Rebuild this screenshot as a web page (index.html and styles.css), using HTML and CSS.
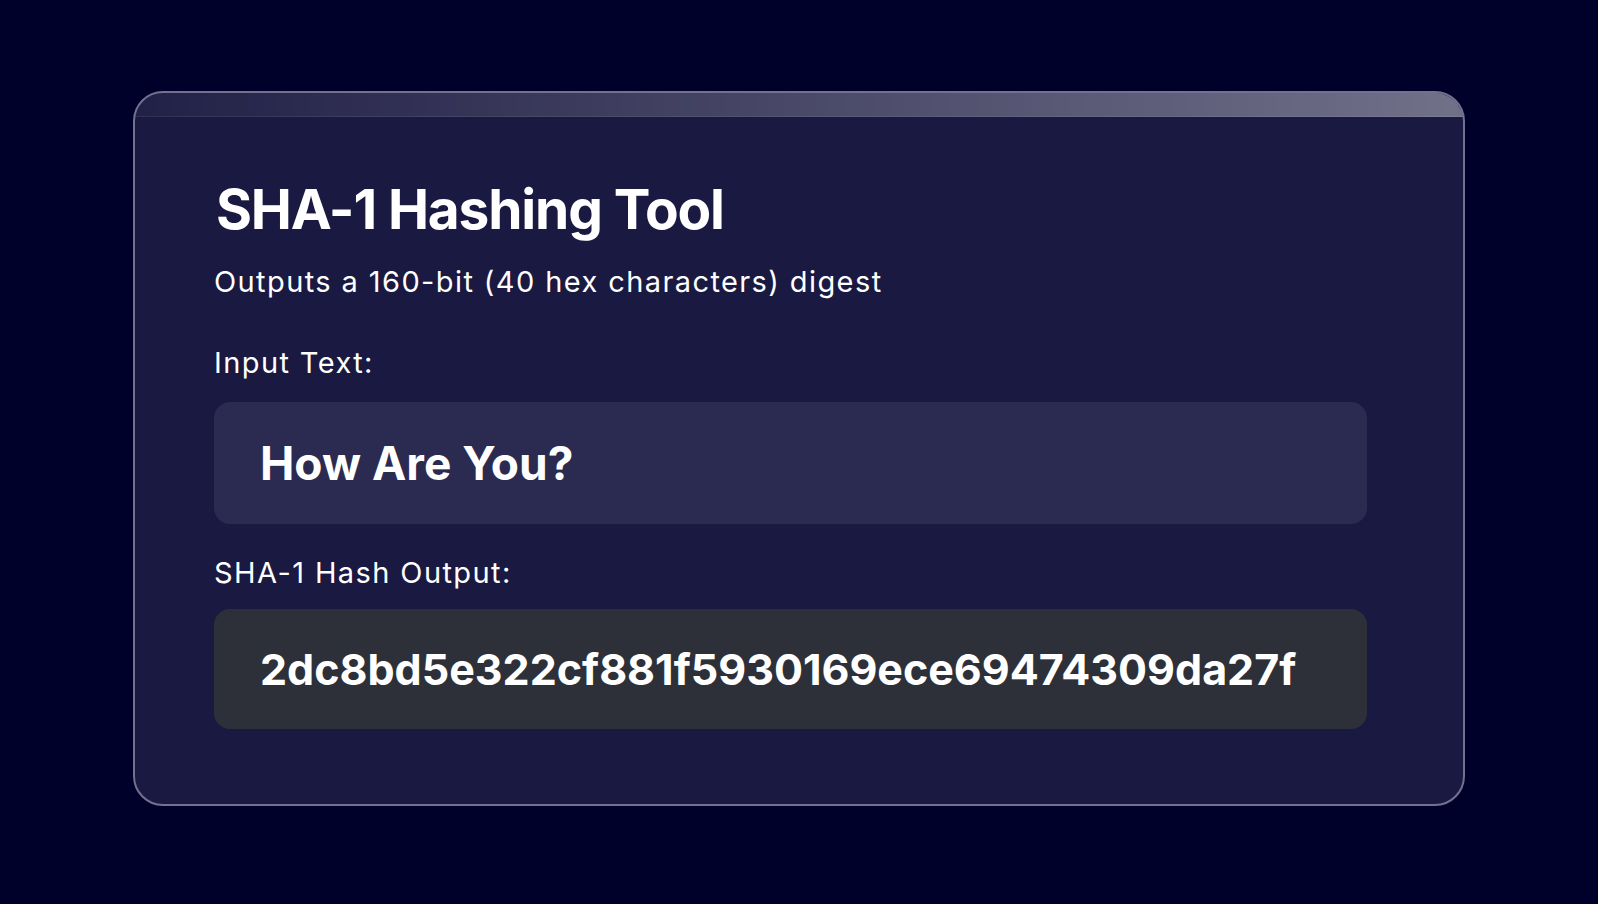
FILE: index.html
```html
<!DOCTYPE html>
<html lang="en">
<head>
  <meta charset="UTF-8">
  <meta name="viewport" content="width=device-width, initial-scale=1.0">
  <title>SHA-1 Hashing Tool</title>
  <link rel="stylesheet" href="styles.css">
</head>
<body>
  <div class="hash-card">
    <div class="card-glow"></div>
    <div class="card-body">
      <h1>SHA-1 Hashing Tool</h1>
      <p class="subtitle">Outputs a 160-bit (40 hex characters) digest</p>

      <label for="inputText" class="field-label">Input Text:</label>
      <input type="text" id="inputText" class="text-input" value="How Are You?">

      <label class="field-label output-label">SHA-1 Hash Output:</label>
      <div class="hash-output" id="hashOutput">2dc8bd5e322cf881f5930169ece69474309da27f</div>
    </div>
  </div>
</body>
</html>
```

FILE: styles.css
```css
body {
  background-color: #00012b; /* deep navy */
  font-family: Inter, "Noto Sans", sans-serif;
  color: #ffffff;
  margin: 0;
  padding: 0;
}

.hash-card {
  width: 1328px;
  margin: 91px 0 0 133px;
  background-color: #1a1941;
  border: 2px solid #72718f;
  border-radius: 30px;
  overflow: hidden;
}

/* light strip along the top edge */
.card-glow {
  height: 23px;
  background: linear-gradient(to right, rgba(255, 255, 255, 0.03), rgba(255, 255, 255, 0.38));
  border-bottom: 1px solid rgba(255, 255, 255, 0.08);
}

.card-body {
  padding: 60px 96px 75px 79px;
}

h1 {
  font-size: 55px;
  font-weight: 700;
  letter-spacing: -1.15px;
  margin: 0;
  line-height: 64px;
  padding-left: 2px;
}

.subtitle {
  font-size: 29px;
  letter-spacing: 1.4px;
  margin: 24px 0 0;
  line-height: 34px;
}

.field-label {
  display: block;
  font-size: 29px;
  letter-spacing: 1.4px;
  line-height: 34px;
  margin-top: 47px;
}

.output-label {
  margin-top: 32px;
}

.text-input {
  display: block;
  box-sizing: border-box;
  width: 100%;
  height: 122px;
  margin-top: 22px;
  padding: 0 46px;
  border: none;
  outline: none;
  border-radius: 16px;
  background-color: #2b2a50;
  color: #ffffff;
  font-family: Inter, "Noto Sans", sans-serif;
  font-size: 46px;
  font-weight: 700;
}

.hash-output {
  box-sizing: border-box;
  height: 120px;
  margin-top: 19px;
  padding: 0 46px;
  border-radius: 16px;
  background-color: #2e3039;
  font-size: 43px;
  font-weight: 700;
  display: flex;
  align-items: center;
}
```
